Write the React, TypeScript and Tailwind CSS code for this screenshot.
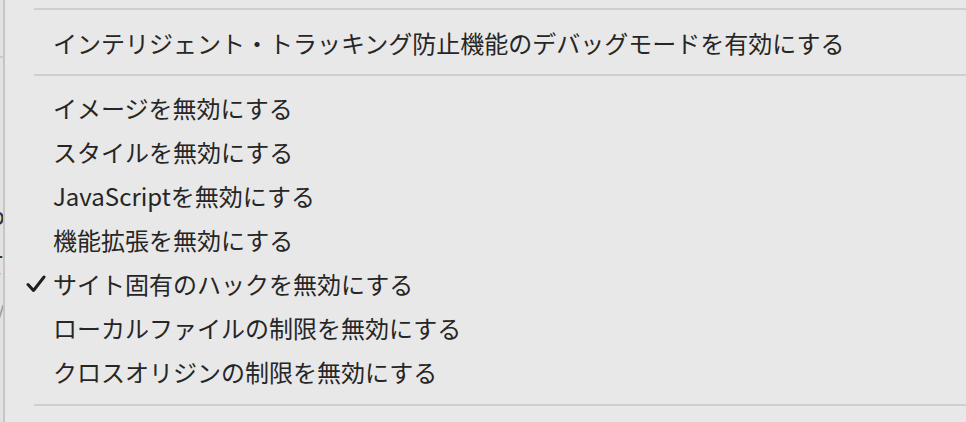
const items: { label: string; checked?: boolean }[] = [
  { label: "イメージを無効にする" },
  { label: "スタイルを無効にする" },
  { label: "JavaScriptを無効にする" },
  { label: "機能拡張を無効にする" },
  { label: "サイト固有のハックを無効にする", checked: true },
  { label: "ローカルファイルの制限を無効にする" },
  { label: "クロスオリジンの制限を無効にする" },
];

function Separator({ top, height }: { top: string; height: string }) {
  return (
    <div className={`${height} ${top} pl-[29px]`}>
      <div className="h-[2px] bg-[#cfcfcf]" />
    </div>
  );
}

function Check() {
  return (
    <svg width="20" height="18" viewBox="0 0 20 18" className="shrink-0">
      <path
        d="M2 9.5 L7.5 15.5 L18 2"
        fill="none"
        stroke="#1f1f1f"
        strokeWidth="3"
        strokeLinecap="round"
        strokeLinejoin="round"
      />
    </svg>
  );
}

function MenuItem({ label, checked }: { label: string; checked?: boolean }) {
  return (
    <div className="h-[44px] flex items-center">
      <div className="w-[48px] flex justify-end pr-[7px]">{checked && <Check />}</div>
      <span>{label}</span>
    </div>
  );
}

export default function App() {
  return (
    <div
      className="w-[966px] h-[422px] flex overflow-hidden bg-[#e8e8e8] text-[24px] text-[#262626]"
      style={{ fontFamily: '"Noto Sans CJK JP", "Noto Sans", sans-serif' }}
    >
      {/* window peeking out behind the menu */}
      <div className="relative w-[5px] shrink-0 bg-[#e2e2e2] border-r-2 border-[#c6c6c6] overflow-hidden text-[#333] leading-none">
        <div className="absolute left-0 right-0 top-[56px] h-[2px] bg-[#c9c9c9]" />
        <span className="absolute left-[-10px] top-[203px]">p</span>
        <span className="absolute left-[-19px] top-[252px]">て</span>
        <span className="absolute left-[-5px] top-[302px] text-[#9a9a9a]">/</span>
      </div>

      <div className="flex-1 flex flex-col leading-none">
        <Separator top="pt-[8px]" height="h-[21px]" />
        <div className="h-[44px] flex items-center pl-[48px]">
          インテリジェント・トラッキング防止機能のデバッグモードを有効にする
        </div>
        <Separator top="pt-[9px]" height="h-[21px]" />
        {items.map((it) => (
          <MenuItem key={it.label} label={it.label} checked={it.checked} />
        ))}
        <Separator top="pt-[10px]" height="h-[20px]" />
      </div>
    </div>
  );
}
